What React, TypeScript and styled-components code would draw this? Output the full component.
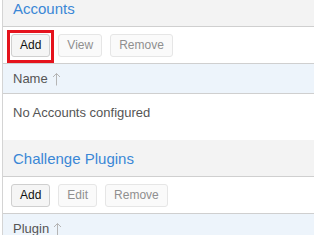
import styled, { createGlobalStyle } from "styled-components";

const GlobalStyle = createGlobalStyle`
  html, body {
    margin: 0;
    padding: 0;
    background: #fff;
    overflow: hidden;
  }
  body {
    font-family: "Liberation Sans", Arial, sans-serif;
  }
`;

const Page = styled.div`
  margin-top: -10px;
  margin-left: 2px;
  border-left: 1px solid #d4d4d4;
`;

const Section = styled.section`
  margin-bottom: 10px;
`;

const Heading = styled.h3`
  margin: 0;
  height: 36px;
  display: flex;
  align-items: center;
  padding-left: 10px;
  background: #f3f3f3;
  border-bottom: 1px solid #cfcfcf;
  color: #3a87d6;
  font-size: 15px;
  font-weight: normal;
`;

const Toolbar = styled.div`
  height: 36px;
  display: flex;
  align-items: center;
  gap: 8px;
  padding-left: 8px;
  border-bottom: 1px solid #cfcfcf;
`;

const Highlight = styled.span`
  position: relative;
  display: inline-flex;
  &::after {
    content: "";
    position: absolute;
    top: -4px;
    left: -4px;
    right: -4px;
    bottom: -6px;
    border: 3px solid #e5131d;
  }
`;

const Button = styled.button<{ $disabled?: boolean }>`
  height: 23px;
  padding: 0 8px;
  border-radius: 3px;
  font-family: "Liberation Sans", Arial, sans-serif;
  font-size: 12px;
  line-height: 21px;
  border: 1px solid ${(p) => (p.$disabled ? "#e6e6e6" : "#cfcfcf")};
  background: ${(p) => (p.$disabled ? "#fafafa" : "#f5f5f5")};
  color: ${(p) => (p.$disabled ? "#8f8f8f" : "#111")};
`;

const TableHead = styled.div`
  height: 29px;
  display: flex;
  align-items: center;
  gap: 4px;
  padding-left: 10px;
  background: #edf4fb;
  border-bottom: 1px solid #cfcfcf;
  color: #555;
  font-size: 13px;
`;

const EmptyRow = styled.div`
  height: 36px;
  display: flex;
  align-items: center;
  padding-left: 10px;
  color: #555;
  font-size: 13px;
`;

function SortUp() {
  return (
    <svg width="9" height="14" viewBox="0 0 9 14" fill="none" stroke="#b5b5b5" strokeWidth="1">
      <path d="M4.5 1.5 V13.5" />
      <path d="M1 5 L4.5 1.5 L8 5" />
    </svg>
  );
}

function App() {
  return (
    <>
      <GlobalStyle />
      <Page>
        <Section>
          <Heading>Accounts</Heading>
          <Toolbar>
            <Highlight>
              <Button>Add</Button>
            </Highlight>
            <Button $disabled>View</Button>
            <Button $disabled>Remove</Button>
          </Toolbar>
          <TableHead>
            Name <SortUp />
          </TableHead>
          <EmptyRow>No Accounts configured</EmptyRow>
        </Section>
        <Section>
          <Heading>Challenge Plugins</Heading>
          <Toolbar>
            <Button>Add</Button>
            <Button $disabled>Edit</Button>
            <Button $disabled>Remove</Button>
          </Toolbar>
          <TableHead>
            Plugin <SortUp />
          </TableHead>
        </Section>
      </Page>
    </>
  );
}

export default App;
